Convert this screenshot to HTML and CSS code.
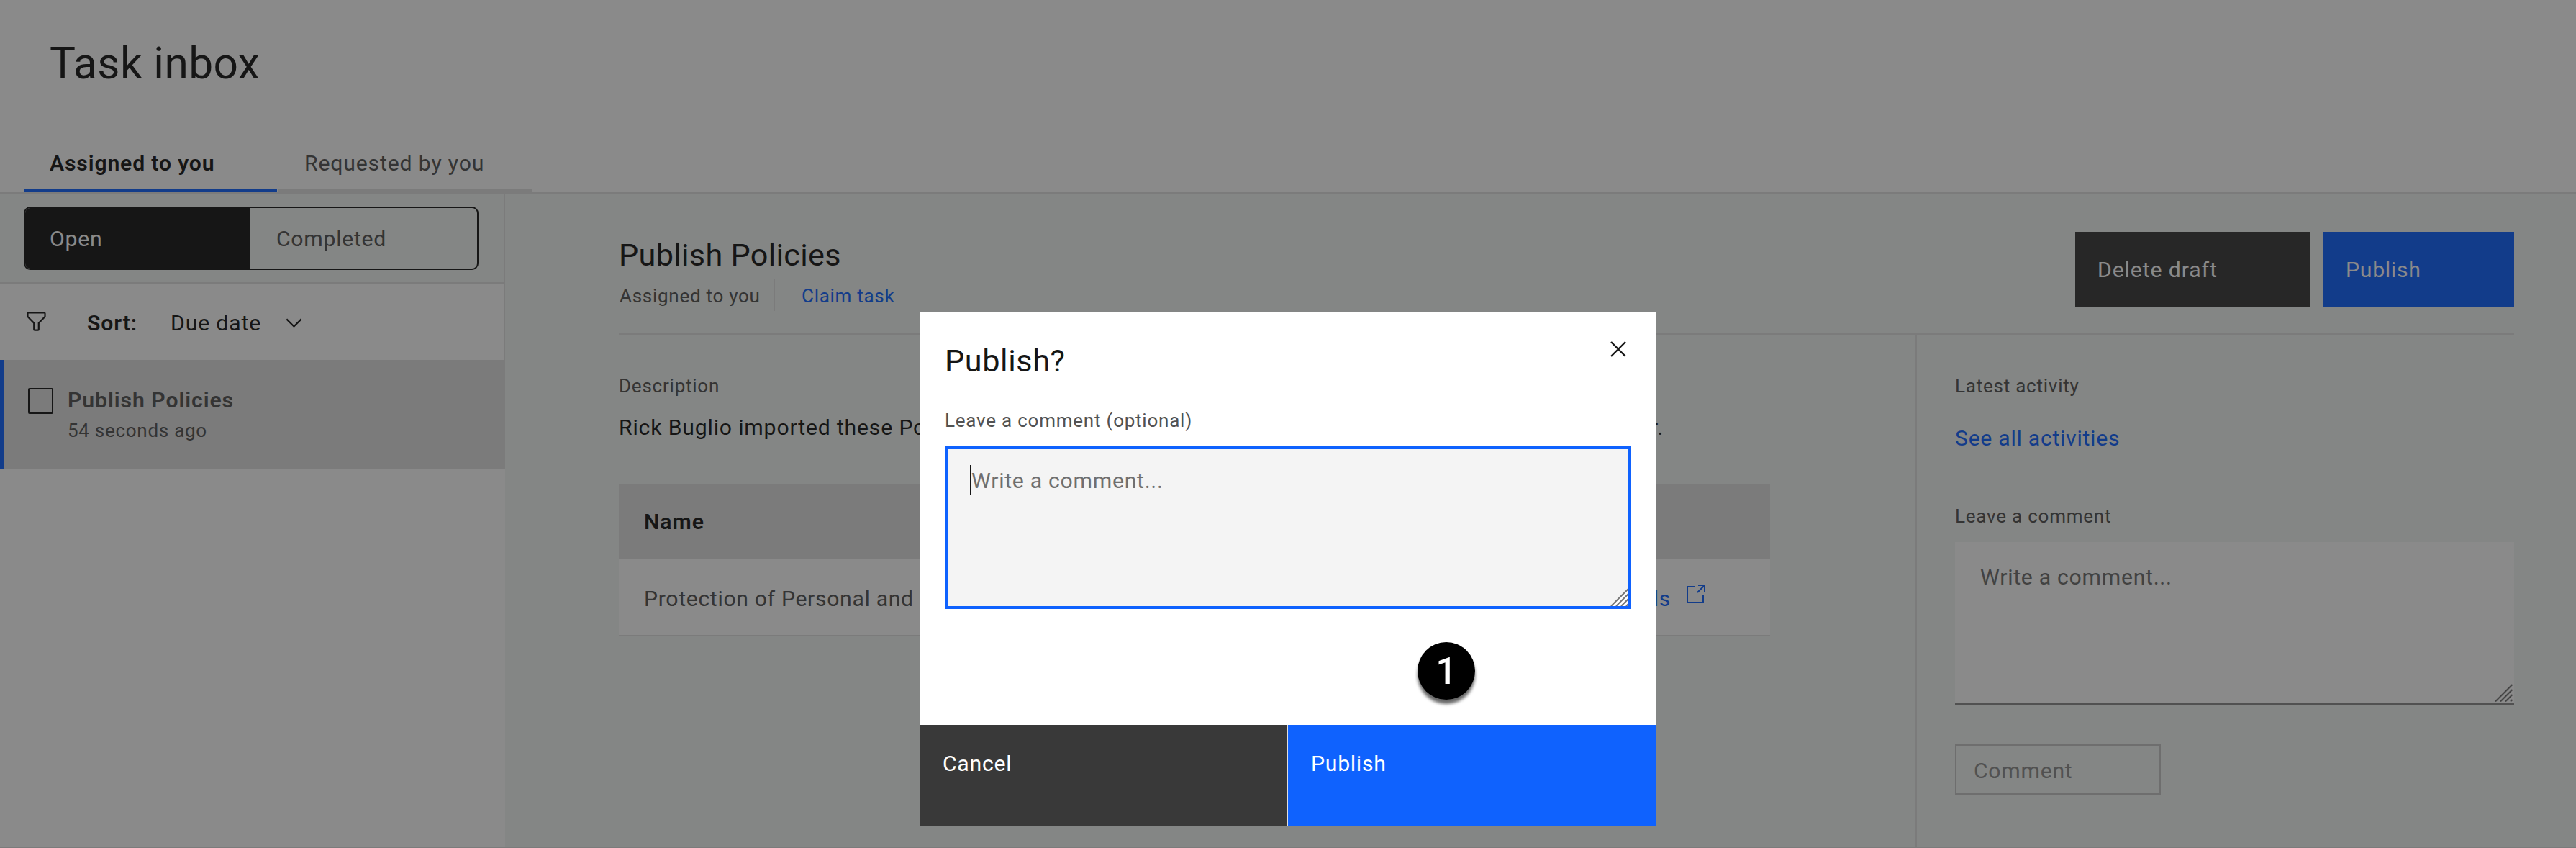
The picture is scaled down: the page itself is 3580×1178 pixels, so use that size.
FILE: index.html
```html
<!DOCTYPE html>
<html lang="en">
<head>
<meta charset="utf-8">
<title>Task inbox</title>
<link rel="stylesheet" href="styles.css">
</head>
<body>
<div class="app">
  <header class="page-header">
    <h1 class="page-title">Task inbox</h1>
    <nav class="tabs">
      <a class="tab tab-active">Assigned to you</a>
      <a class="tab">Requested by you</a>
    </nav>
  </header>
  <div class="workspace">
    <aside class="sidebar">
      <div class="filter-bar">
        <div class="switcher">
          <button class="switch switch-active">Open</button>
          <button class="switch">Completed</button>
        </div>
      </div>
      <div class="sort-bar">
        <svg class="filter-icon" viewBox="0 0 32 32"><path fill="currentColor" d="M18,28H14a2,2,0,0,1-2-2V18.41L4.59,11A2,2,0,0,1,4,9.59V6A2,2,0,0,1,6,4H26a2,2,0,0,1,2,2V9.59A2,2,0,0,1,27.41,11L20,18.41V26A2,2,0,0,1,18,28ZM6,6V9.59l8,8V26h4V17.59l8-8V6Z"/></svg>
        <span class="sort-label">Sort:</span>
        <span class="sort-value">Due date</span>
        <svg class="chevron" viewBox="0 0 16 16"><path fill="currentColor" d="M8 11 3 6 3.7 5.3 8 9.6 12.3 5.3 13 6z"/></svg>
      </div>
      <div class="task">
        <span class="checkbox"></span>
        <div class="task-text">
          <div class="task-name">Publish Policies</div>
          <div class="task-time">54 seconds ago</div>
        </div>
      </div>
    </aside>
    <main class="detail">
      <div class="detail-header">
        <div>
          <h2 class="heading">Publish Policies</h2>
          <div class="meta">
            <span class="assignee">Assigned to you</span>
            <a class="claim">Claim task</a>
          </div>
        </div>
        <div class="actions">
          <button class="btn btn-secondary">Delete draft</button>
          <button class="btn btn-primary">Publish</button>
        </div>
      </div>
      <div class="detail-body">
        <section class="content">
          <div class="label">Description</div>
          <p class="description"><span>Rick Buglio imported these Policies.</span><span>Review and publish when ready for.</span></p>
          <div class="table">
            <div class="table-head">Name</div>
            <div class="table-row">
              <span class="policy-name">Protection of Personal and Sensitive Information</span>
              <a class="details-link">View details</a>
              <svg class="launch" viewBox="0 0 26 26" fill="none" stroke="currentColor" stroke-width="2"><path d="M12 3H1V25H23V14M16 1H25V10M25 1 15 11"/></svg>
            </div>
          </div>
        </section>
        <aside class="rail">
          <div class="label">Latest activity</div>
          <a class="activities">See all activities</a>
          <div class="label">Leave a comment</div>
          <div class="comment-box">Write a comment...
            <svg class="grip" viewBox="0 0 25 25"><path d="M1 24.5 24.5 1M8 24.5 24.5 8M15 24.5 24.5 15M22 24.5 24.5 22"/></svg>
          </div>
          <button class="comment-btn">Comment</button>
        </aside>
      </div>
    </main>
  </div>
</div>
<div class="overlay">
  <div class="modal">
    <svg class="close" viewBox="0 0 22 22"><path d="M1 1 21 21M21 1 1 21"/></svg>
    <div class="modal-body">
      <h2 class="heading">Publish?</h2>
      <div class="label">Leave a comment (optional)</div>
      <div class="modal-input"><span class="caret"></span>Write a comment...
        <svg class="grip" viewBox="0 0 25 25"><path class="grip-fill" d="M1 25 25 1V25z"/><path d="M1 25 25 1M8 25 25 8M15 25 25 15M22 25 25 22"/></svg>
      </div>
    </div>
    <div class="modal-footer">
      <button class="modal-btn modal-cancel">Cancel</button>
      <button class="modal-btn modal-publish">Publish</button>
    </div>
    <span class="badge">1</span>
  </div>
</div>
</body>
</html>
```
FILE: styles.css
```css
* { box-sizing: border-box; }
body {
  margin: 0;
  font: 400 30.2px/40px Roboto, "Liberation Sans", sans-serif;
  letter-spacing: .72px;
  color: #161616;
}
h1, h2, p { margin: 0; font-weight: 400; }
button {
  font: inherit;
  color: inherit;
  letter-spacing: inherit;
  text-align: left;
  border: 0;
  padding: 0;
  background: none;
}
.app {
  height: 1178px;
  display: flex;
  flex-direction: column;
  background: #f2f6f4;
  overflow: hidden;
  border-bottom: 1px solid #e0e0e0;
}
.page-header {
  height: 269px;
  flex: none;
  display: flex;
  flex-direction: column;
  justify-content: space-between;
  padding: 49px 0 0 33px;
  background: #fff;
  border-bottom: 2px solid #e0e0e0;
}
.page-title { font-size: 60.4px; line-height: 80px; letter-spacing: .4px; padding-left: 36px; }
.tabs { display: flex; gap: 2px; }
.tab {
  width: 352px;
  height: 60px;
  padding-left: 36px;
  color: #525252;
  letter-spacing: .84px;
  border-bottom: 4px solid #e0e0e0;
}
.tab-active { color: #161616; font-weight: 600; border-color: #0f62fe; }

.workspace { flex: 1; display: flex; }
.sidebar { width: 702px; flex: none; background: #fff; }
.filter-bar {
  height: 125px;
  padding: 18px 35px 17px 33px;
  background: #f2f6f4;
  border-bottom: 2px solid #e0e0e0;
  border-right: 2px solid #e0e0e0;
}
.switcher {
  height: 88px;
  width: 632px;
  display: flex;
  border: 2px solid #161616;
  border-radius: 9px;
  overflow: hidden;
}
.switch { flex: 1; padding: 2px 0 0 36px; color: #525252; }
.switch-active { background: #161616; color: #fff; padding-left: 34px; }
.sort-bar {
  height: 106px;
  display: flex;
  align-items: center;
  padding: 3px 0 0 33px;
  border-right: 2px solid #e0e0e0;
}
.filter-icon { width: 35px; height: 35px; margin-bottom: 4px; }
.sort-label { font-weight: 600; margin-left: 53px; width: 116px; letter-spacing: .9px; }
.sort-value { width: 154px; letter-spacing: .84px; }
.chevron { width: 35px; height: 35px; }
.task {
  height: 152px;
  display: flex;
  padding: 36px 0 0 33px;
  background: #e0e0e0;
  border-left: 6px solid #0f62fe;
  color: #525252;
}
.checkbox { width: 35px; height: 36px; margin: 3px 20px 0 0; border: 2px solid #161616; border-radius: 2px; }
.task-name { font-weight: 600; letter-spacing: .94px; }
.task-time { font-size: 26px; line-height: 36px; margin-top: 4px; }

.detail { flex: 1; padding: 0 86px 0 158px; display: flex; flex-direction: column; }
.detail-header {
  height: 196px;
  display: flex;
  justify-content: space-between;
  padding-top: 53px;
  border-bottom: 2px solid #e0e0e0;
}
.heading { font-size: 43.2px; line-height: 56px; letter-spacing: .3px; }
.detail-header .heading { margin-top: 5px; }
.meta { display: flex; margin-top: 5px; font-size: 26px; line-height: 46px; height: 44px; }
.assignee { width: 217px; padding-left: 1px; color: #525252; border-right: 2px solid #e0e0e0; }
.claim { padding-left: 37px; color: #0f62fe; }
.actions { display: flex; gap: 18px; color: #fff; }
.btn { height: 105px; padding: 0 0 0 31px; }
.btn-secondary { width: 327px; background: #393939; letter-spacing: .9px; }
.btn-primary { width: 265px; background: #0f62fe; }

.detail-body { flex: 1; display: flex; }
.content { width: 1802px; padding-top: 53px; }
.label { font-size: 26px; line-height: 37px; height: 36px; color: #525252; letter-spacing: .77px; }
.description { width: 1452px; margin-top: 20px; display: flex; justify-content: space-between; letter-spacing: .82px; white-space: nowrap; }
.table { width: 1600px; margin-top: 58px; }
.table-head { height: 104px; line-height: 106px; padding-left: 35px; background: #e0e0e0; font-weight: 600; letter-spacing: 1px; }
.table-row {
  height: 108px;
  display: flex;
  align-items: center;
  padding: 6px 90px 0 35px;
  background: #fff;
  border-bottom: 2px solid #e0e0e0;
}
.policy-name { flex: 1; color: #525252; letter-spacing: .66px; }
.details-link { color: #0f62fe; }
.launch { width: 26px; height: 26px; margin: 0 0 14px 22px; color: #0f62fe; }

.rail { flex: 1; padding: 53px 0 0 53px; border-left: 2px solid #e0e0e0; }
.activities { display: block; margin: 35px 0 70px; color: #0f62fe; }
.comment-box {
  position: relative;
  height: 226px;
  margin-top: 18px;
  padding: 29px 35px;
  background: #fff;
  color: #6f6f6f;
  border-bottom: 2px solid #8d8d8d;
}
.grip { position: absolute; right: 2px; bottom: 2px; width: 25px; height: 25px; fill: none; stroke: #757575; stroke-width: 2; }
.comment-btn {
  display: block;
  width: 286px;
  height: 70px;
  margin-top: 55px;
  padding: 3px 0 0 24px;
  border: 2px solid #c6c6c6;
  color: #8d8d8d;
}

.overlay {
  position: absolute;
  inset: 0;
  padding-top: 433px;
  display: flex;
  justify-content: center;
  align-items: flex-start;
  background: rgba(22, 22, 22, .5);
}
.modal { position: relative; width: 1024px; height: 714px; display: flex; flex-direction: column; background: #fff; }
.modal-body { flex: 1; padding: 41px 35px 0; }
.modal .label { margin-top: 36px; }
.modal .heading { letter-spacing: .6px; }
.close { position: absolute; left: 960px; top: 41px; width: 22px; height: 22px; stroke: #161616; stroke-width: 2.4; fill: none; }
.modal-input {
  position: relative;
  height: 226px;
  margin-top: 18px;
  padding: 24px 33px;
  border: 4px solid #0f62fe;
  background: #f4f4f4;
  color: #6f6f6f;
}
.modal-input .grip { right: 0; bottom: 0; }
.grip .grip-fill { fill: #fff; stroke: none; }
.caret { position: absolute; left: 31px; top: 22px; width: 2px; height: 41px; background: #161616; }
.modal-footer { height: 140px; display: flex; gap: 2px; background: #e0e0e0; }
.modal-btn { padding: 0 0 32px 32px; color: #fff; }
.modal-cancel { width: 510px; background: #393939; }
.modal-publish { flex: 1; background: #0f62fe; }
.badge {
  position: absolute;
  left: 692px;
  top: 459px;
  width: 80px;
  height: 80px;
  border-radius: 50%;
  background: #000;
  color: #fff;
  font-size: 52px;
  font-weight: 500;
  line-height: 82px;
  text-align: center;
  letter-spacing: 0;
  box-shadow: 0 6px 4px rgba(0, 0, 0, .6);
}
```
